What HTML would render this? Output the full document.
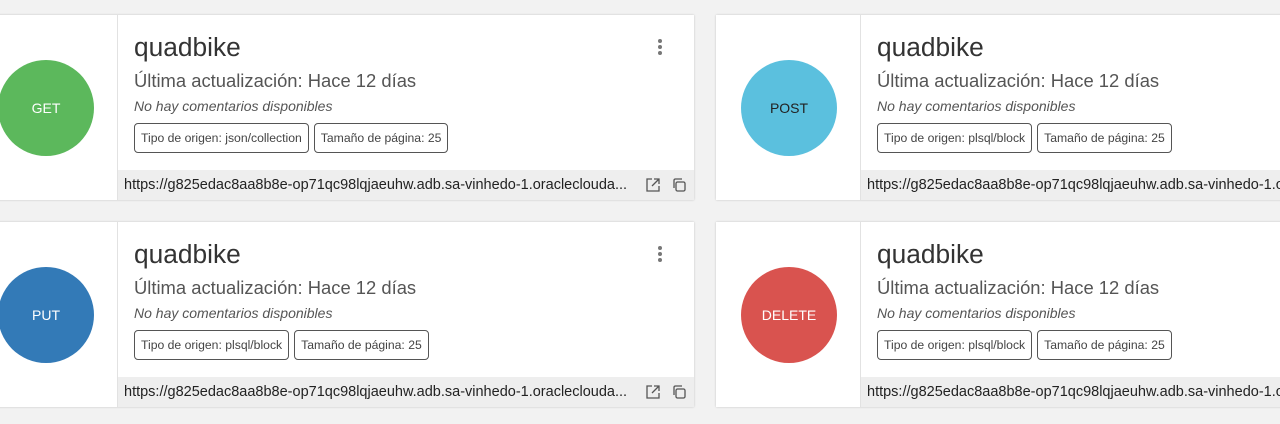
<!DOCTYPE html>
<html><head><meta charset="utf-8"><style>
body{margin:0;width:1280px;height:424px;background:#f2f2f2;position:relative;overflow:hidden;font-family:"Liberation Sans",Arial,sans-serif;}
.card{position:absolute;height:185px;width:721px;background:#fff;box-shadow:0 0 2px rgba(0,0,0,.2);}
.left{position:absolute;left:0;top:0;width:144px;height:185px;border-right:1px solid #e2e2e2;}
.circ{position:absolute;left:25px;top:45px;width:96px;height:96px;border-radius:50%;color:#fff;font-size:14px;display:flex;align-items:center;justify-content:center;}
.right{position:absolute;left:145px;top:0;width:576px;height:185px;}
.t{position:absolute;left:16px;top:17px;font-size:26.3px;color:#333;}
.s{position:absolute;left:16px;top:55px;font-size:18.4px;color:#555;}
.c{position:absolute;left:16px;top:83px;font-size:14px;color:#555;font-style:italic;}
.chips{position:absolute;left:16px;top:108px;display:flex;gap:5px;}
.chip{border:1px solid #555;border-radius:4px;height:28px;line-height:28px;padding:0 6px;font-size:12.2px;color:#444;}
.f{position:absolute;left:0;top:155px;width:576px;height:30px;background:#eee;font-size:14.5px;color:#222;line-height:30px;overflow:hidden;}
.f span{position:absolute;left:6px;white-space:nowrap;}
.ic{position:absolute;top:7px;}
.dots{position:absolute;left:538px;top:23px;}
</style></head><body>

<div class="card" style="left:-27px;top:15px">
 <div class="left"><div class="circ" style="background:#5cb85c">GET</div></div>
 <div class="right">
  <div class="t">quadbike</div><div class="s">Última actualización: Hace 12 días</div><div class="c">No hay comentarios disponibles</div>
  <div class="chips"><div class="chip">Tipo de origen: json/collection</div><div class="chip">Tamaño de página: 25</div></div>
  <svg class="dots" width="8" height="18"><circle cx="4" cy="3" r="2" fill="#777"/><circle cx="4" cy="9" r="2" fill="#777"/><circle cx="4" cy="15" r="2" fill="#777"/></svg>
  <div class="f"><span>https://g825edac8aa8b8e-op71qc98lqjaeuhw.adb.sa-vinhedo-1.oraclecloudа...</span>
   <svg class="ic" style="left:527px" width="16" height="16" viewBox="0 0 16 16" fill="none" stroke="#555" stroke-width="1.3"><path d="M7 2H2v12h12V9M9 2h5v5M14 2L7 9"/></svg>
   <svg class="ic" style="left:553px" width="16" height="16" viewBox="0 0 16 16" fill="none" stroke="#555" stroke-width="1.3"><rect x="5" y="5" width="9" height="9" rx="1.5"/><path d="M3 11V3.5Q3 2 4.5 2H11"/></svg>
  </div>
 </div>
</div>

<div class="card" style="left:716px;top:15px">
 <div class="left"><div class="circ" style="background:#5bc0de;color:#222">POST</div></div>
 <div class="right">
  <div class="t">quadbike</div><div class="s">Última actualización: Hace 12 días</div><div class="c">No hay comentarios disponibles</div>
  <div class="chips"><div class="chip">Tipo de origen: plsql/block</div><div class="chip">Tamaño de página: 25</div></div>
  <div class="f"><span>https://g825edac8aa8b8e-op71qc98lqjaeuhw.adb.sa-vinhedo-1.oraclecloudа...</span></div>
 </div>
</div>

<div class="card" style="left:-27px;top:222px">
 <div class="left"><div class="circ" style="background:#337ab7">PUT</div></div>
 <div class="right">
  <div class="t">quadbike</div><div class="s">Última actualización: Hace 12 días</div><div class="c">No hay comentarios disponibles</div>
  <div class="chips"><div class="chip">Tipo de origen: plsql/block</div><div class="chip">Tamaño de página: 25</div></div>
  <svg class="dots" width="8" height="18"><circle cx="4" cy="3" r="2" fill="#777"/><circle cx="4" cy="9" r="2" fill="#777"/><circle cx="4" cy="15" r="2" fill="#777"/></svg>
  <div class="f"><span>https://g825edac8aa8b8e-op71qc98lqjaeuhw.adb.sa-vinhedo-1.oraclecloudа...</span>
   <svg class="ic" style="left:527px" width="16" height="16" viewBox="0 0 16 16" fill="none" stroke="#555" stroke-width="1.3"><path d="M7 2H2v12h12V9M9 2h5v5M14 2L7 9"/></svg>
   <svg class="ic" style="left:553px" width="16" height="16" viewBox="0 0 16 16" fill="none" stroke="#555" stroke-width="1.3"><rect x="5" y="5" width="9" height="9" rx="1.5"/><path d="M3 11V3.5Q3 2 4.5 2H11"/></svg>
  </div>
 </div>
</div>

<div class="card" style="left:716px;top:222px">
 <div class="left"><div class="circ" style="background:#d9534f">DELETE</div></div>
 <div class="right">
  <div class="t">quadbike</div><div class="s">Última actualización: Hace 12 días</div><div class="c">No hay comentarios disponibles</div>
  <div class="chips"><div class="chip">Tipo de origen: plsql/block</div><div class="chip">Tamaño de página: 25</div></div>
  <div class="f"><span>https://g825edac8aa8b8e-op71qc98lqjaeuhw.adb.sa-vinhedo-1.oraclecloudа...</span></div>
 </div>
</div>
</body></html>
